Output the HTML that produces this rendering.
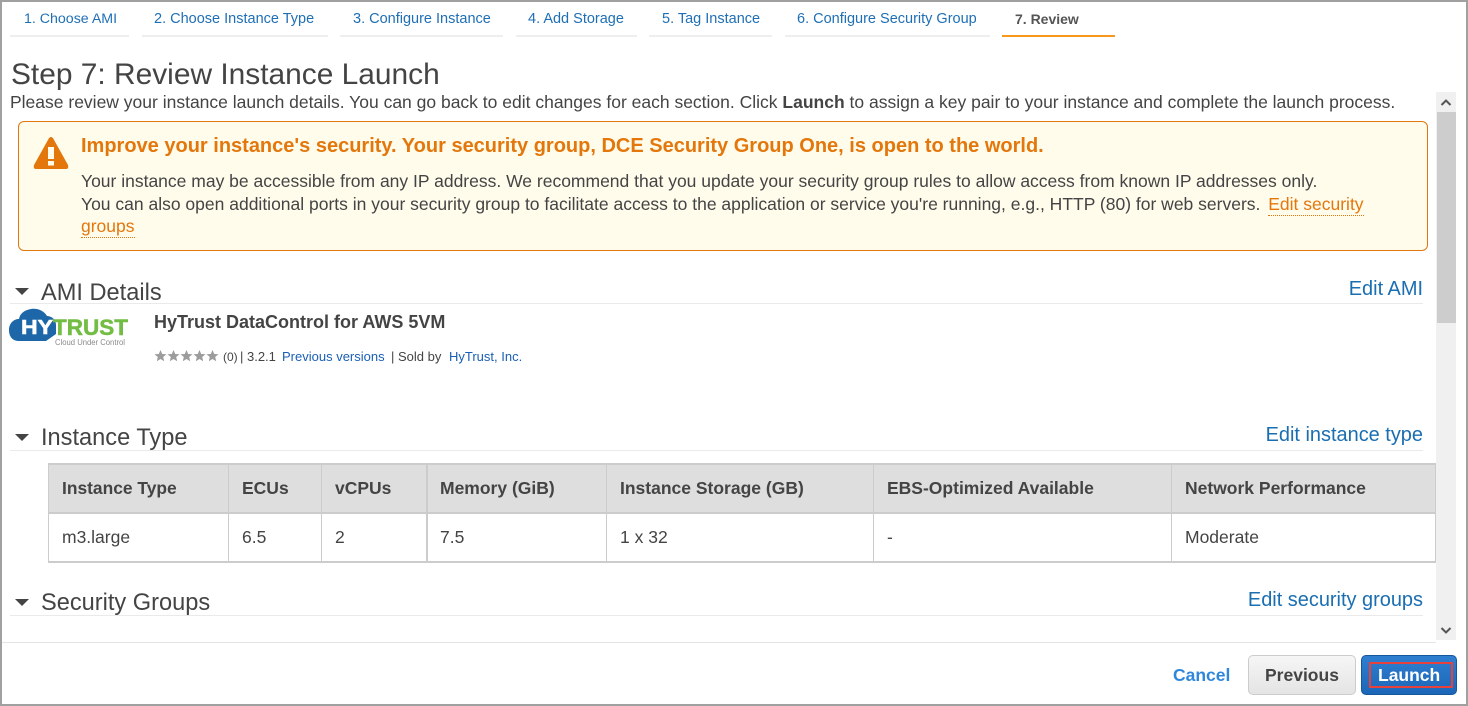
<!DOCTYPE html>
<html><head><meta charset="utf-8"><style>
html,body{margin:0;padding:0;background:#fff}
body{width:1468px;height:706px;position:relative;overflow:hidden;font-family:"Liberation Sans",sans-serif;color:#444}
.a{position:absolute;white-space:nowrap}
.tab{position:absolute;top:35px;height:2px;background:#eee}
.tt{position:absolute;top:11px;font-size:14.5px;line-height:16px;color:#1f6fb5;white-space:nowrap}
.line{position:absolute;left:10px;width:1413px;height:1px;background:#eaeaea}
.sec{position:absolute;left:41px;font-size:23.6px;line-height:28px;color:#444;white-space:nowrap}
.tri{position:absolute;left:15px;width:0;height:0;border-left:7.5px solid transparent;border-right:7.5px solid transparent;border-top:7px solid #444}
.edit{position:absolute;right:45px;font-size:19.95px;line-height:24px;color:#1a6eb2;white-space:nowrap}
.v{position:absolute;top:463px;height:99px;width:1px;background:#ccc}
.th{position:absolute;top:478px;font-size:17.5px;line-height:20px;font-weight:bold;color:#444;white-space:nowrap}
.td{position:absolute;top:528px;font-size:17.5px;line-height:19px;color:#444;white-space:nowrap}
.s13{position:absolute;top:349px;font-size:13px;line-height:15px;white-space:nowrap}
</style></head><body>
<div class="a" style="left:0;top:0;width:1468px;height:2px;background:#a0a0a0"></div>
<div class="a" style="left:0;top:704px;width:1468px;height:2px;background:#a0a0a0"></div>
<div class="a" style="left:0;top:0;width:2px;height:706px;background:#a0a0a0"></div>
<div class="a" style="left:1466px;top:0;width:2px;height:706px;background:#a0a0a0"></div>

<div class="tab" style="left:10px;width:119px"></div><div class="tt" style="left:24px;font-size:14.2px">1. Choose AMI</div>
<div class="tab" style="left:142px;width:186px"></div><div class="tt" style="left:154px">2. Choose Instance Type</div>
<div class="tab" style="left:340px;width:163px"></div><div class="tt" style="left:353px">3. Configure Instance</div>
<div class="tab" style="left:516px;width:121px"></div><div class="tt" style="left:528px">4. Add Storage</div>
<div class="tab" style="left:649px;width:123px"></div><div class="tt" style="left:662px">5. Tag Instance</div>
<div class="tab" style="left:785px;width:205px"></div><div class="tt" style="left:797px">6. Configure Security Group</div>
<div class="tab" style="left:1002px;width:113px;background:#f7981d"></div><div class="tt" style="left:1015px;color:#555;font-weight:bold;font-size:14px">7. Review</div>

<div class="a" style="left:11px;top:57px;font-size:29.9px;line-height:36px;color:#444">Step 7: Review Instance Launch</div>
<div class="a" style="left:10px;top:92px;font-size:17.5px;line-height:20px;color:#444">Please review your instance launch details. You can go back to edit changes for each section. Click <b>Launch</b> to assign a key pair to your instance and complete the launch process.</div>

<div class="a" style="left:1436px;top:92px;width:20px;height:548px;background:#f0f0f0"></div>
<div class="a" style="left:1437px;top:112px;width:19px;height:211px;background:#cdcdcd"></div>
<svg class="a" style="left:1436px;top:92px" width="20" height="20"><path d="M5.500 13 L10 8.500 L14.500 13" fill="none" stroke="#555" stroke-width="2"/></svg>
<svg class="a" style="left:1436px;top:621px" width="20" height="20"><path d="M5.500 7 L10 11.500 L14.500 7" fill="none" stroke="#555" stroke-width="2"/></svg>

<div class="a" style="left:18px;top:121px;width:1408px;height:128px;background:#fffcec;border:1px solid #e0780f;border-radius:6px"></div>
<svg class="a" style="left:33px;top:136px" width="36" height="34"><path d="M18 1 Q19.500 1 20.500 3 L35 29 Q36 32.500 33.500 33 L2.500 33 Q0 32.500 1 29 L15.500 3 Q16.500 1 18 1Z" fill="#e4770c"/><rect x="15" y="11" width="6" height="12" fill="#fffcec"/><rect x="15" y="25" width="6" height="4.500" fill="#fffcec"/></svg>
<div class="a" style="left:81px;top:134px;font-size:20px;line-height:24px;font-weight:bold;color:#e4770c">Improve your instance's security. Your security group, DCE Security Group One, is open to the world.</div>
<div class="a" style="left:81px;top:171px;font-size:17.5px;line-height:20px;color:#444">Your instance may be accessible from any IP address. We recommend that you update your security group rules to allow access from known IP addresses only.</div>
<div class="a" style="left:81px;top:194px;font-size:17.5px;line-height:20px;color:#444">You can also open additional ports in your security group to facilitate access to the application or service you're running, e.g., HTTP (80) for web servers. <span style="color:#e4770c;border-bottom:1px dotted #e4770c;margin-left:3px;padding-bottom:1px">Edit security</span></div>
<div class="a" style="left:81px;top:216px;font-size:17.5px;line-height:20px;color:#e4770c;border-bottom:1px dotted #e4770c;padding-bottom:1px">groups</div>

<div class="tri" style="top:288px"></div>
<div class="sec" style="top:279px">AMI Details</div>
<div class="edit" style="top:277px">Edit AMI</div>
<div class="line" style="top:303px"></div>

<svg class="a" style="left:9px;top:305px" width="122" height="44">
<path d="M10 36 C3 36 0 31 0 25 C0 18 5 14 10 14 C11 8 16 5 22 4 C29 3 35 6 38 11 C42 11 47 14 47 20 L47 29 L37 36 Z" fill="#1d67a8"/>
<text x="12" y="29" font-family="Liberation Sans,sans-serif" font-size="20.500" font-weight="bold" fill="#fff" stroke="#fff" stroke-width=".6" textLength="32" lengthAdjust="spacingAndGlyphs">HY</text>
<text x="44" y="30" font-family="Liberation Sans,sans-serif" font-size="22" font-weight="bold" fill="#73bd45" stroke="#73bd45" stroke-width=".5" textLength="75" lengthAdjust="spacingAndGlyphs">TRUST</text>
<text x="46" y="40" font-family="Liberation Sans,sans-serif" font-size="8.500" fill="#8a8a8a" textLength="70" lengthAdjust="spacingAndGlyphs">Cloud Under Control</text>
</svg>
<div class="a" style="left:154px;top:312px;font-size:18px;line-height:20px;font-weight:bold;color:#444">HyTrust DataControl for AWS 5VM</div>
<svg class="a" style="left:154px;top:349px" width="66" height="14" fill="#9c9c9c">
<path d="M6.500 1 L8.200 5 L12.500 5.300 L9.200 8 L10.200 12.200 L6.500 10 L2.800 12.200 L3.800 8 L.500 5.300 L4.800 5Z"/>
<path transform="translate(13 0)" d="M6.500 1 L8.200 5 L12.500 5.300 L9.200 8 L10.200 12.200 L6.500 10 L2.800 12.200 L3.800 8 L.500 5.300 L4.800 5Z"/>
<path transform="translate(26 0)" d="M6.500 1 L8.200 5 L12.500 5.300 L9.200 8 L10.200 12.200 L6.500 10 L2.800 12.200 L3.800 8 L.500 5.300 L4.800 5Z"/>
<path transform="translate(39 0)" d="M6.500 1 L8.200 5 L12.500 5.300 L9.200 8 L10.200 12.200 L6.500 10 L2.800 12.200 L3.800 8 L.500 5.300 L4.800 5Z"/>
<path transform="translate(52 0)" d="M6.500 1 L8.200 5 L12.500 5.300 L9.200 8 L10.200 12.200 L6.500 10 L2.800 12.200 L3.800 8 L.500 5.300 L4.800 5Z"/>
</svg>
<div class="a" style="left:223px;top:350px;font-size:12px;line-height:15px;color:#444">(0)</div>
<div class="s13" style="left:240px;color:#444">| 3.2.1</div>
<div class="s13" style="left:282px;color:#1a5fb4">Previous versions</div>
<div class="s13" style="left:391px;color:#444">| Sold by</div>
<div class="s13" style="left:449px;color:#1a5fb4">HyTrust, Inc.</div>

<div class="tri" style="top:434px"></div>
<div class="sec" style="top:424px">Instance Type</div>
<div class="edit" style="top:423px">Edit instance type</div>
<div class="line" style="top:450px"></div>

<div class="a" style="left:48px;top:463px;width:1388px;height:50px;background:#dedede"></div>
<div class="a" style="left:48px;top:463px;width:1388px;height:2px;background:#ccc"></div>
<div class="a" style="left:48px;top:512px;width:1388px;height:2px;background:#ccc"></div>
<div class="a" style="left:48px;top:561px;width:1388px;height:2px;background:#ccc"></div>
<div class="v" style="left:48px"></div>
<div class="v" style="left:228px"></div>
<div class="v" style="left:321px"></div>
<div class="v" style="left:426px;width:2px"></div>
<div class="v" style="left:606px"></div>
<div class="v" style="left:873px"></div>
<div class="v" style="left:1171px"></div>
<div class="v" style="left:1435px"></div>
<div class="th" style="left:62px;font-size:17.4px">Instance Type</div>
<div class="th" style="left:242px">ECUs</div>
<div class="th" style="left:335px">vCPUs</div>
<div class="th" style="left:440px">Memory (GiB)</div>
<div class="th" style="left:620px">Instance Storage (GB)</div>
<div class="th" style="left:887px">EBS-Optimized Available</div>
<div class="th" style="left:1185px">Network Performance</div>
<div class="td" style="left:62px">m3.large</div>
<div class="td" style="left:242px">6.5</div>
<div class="td" style="left:335px">2</div>
<div class="td" style="left:440px">7.5</div>
<div class="td" style="left:620px">1 x 32</div>
<div class="td" style="left:887px">-</div>
<div class="td" style="left:1185px">Moderate</div>

<div class="tri" style="top:599px"></div>
<div class="sec" style="top:589px">Security Groups</div>
<div class="edit" style="top:588px">Edit security groups</div>
<div class="line" style="top:615px"></div>

<div class="a" style="left:2px;top:642px;width:1434px;height:1px;background:#e4e4e4"></div>
<div class="a" style="left:1173px;top:665px;font-size:17.500px;line-height:20px;font-weight:bold;color:#2f87dc">Cancel</div>
<div class="a" style="left:1248px;top:655px;width:106px;height:38px;border:1px solid #ccc;border-radius:5px;background:linear-gradient(#f6f6f6,#e4e4e4)"></div>
<div class="a" style="left:1265px;top:665px;font-size:17.500px;line-height:20px;font-weight:bold;color:#444">Previous</div>
<div class="a" style="left:1361px;top:655px;width:94px;height:38px;border:1px solid #15579c;border-radius:5px;background:linear-gradient(#2f7fd0,#1c66b8)"></div>
<div class="a" style="left:1369px;top:662px;width:80px;height:22px;border:2px solid #e8403a"></div>
<div class="a" style="left:1378px;top:665px;font-size:17.500px;line-height:20px;font-weight:bold;color:#fff">Launch</div>
</body></html>
